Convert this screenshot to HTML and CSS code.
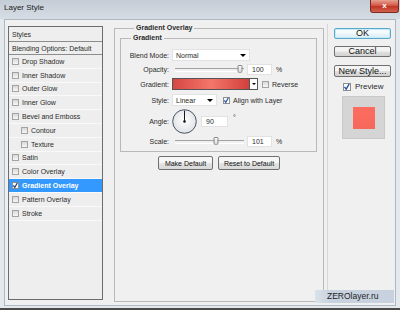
FILE: index.html
```html
<!DOCTYPE html>
<html lang="en">
<head>
    <meta charset="UTF-8">
    <title>Layer Style</title>
    <link rel="stylesheet" href="styles.css">
</head>
<body>
    <div class="window">
        <div class="titlebar">
            <span class="title">Layer Style</span>
            <span class="close">x</span>
        </div>
        <div class="dialog">
            <ul class="styles-list">
                <li class="head first">Styles</li>
                <li class="head">Blending Options: Default</li>
                <li><span class="check"></span>Drop Shadow</li>
                <li><span class="check"></span>Inner Shadow</li>
                <li><span class="check"></span>Outer Glow</li>
                <li><span class="check"></span>Inner Glow</li>
                <li><span class="check"></span>Bevel and Emboss</li>
                <li class="sub"><span class="check"></span>Contour</li>
                <li class="sub"><span class="check"></span>Texture</li>
                <li><span class="check"></span>Satin</li>
                <li><span class="check"></span>Color Overlay</li>
                <li class="active"><span class="check on"><svg viewBox="0 0 7 7"><path d="M1.3 3.4l1.5 2 2.6-4.6" fill="none" stroke="#1d3f7a" stroke-width="1.2"/></svg></span>Gradient Overlay</li>
                <li><span class="check"></span>Pattern Overlay</li>
                <li><span class="check"></span>Stroke</li>
            </ul>

            <fieldset class="group outer">
                <legend>Gradient Overlay</legend>
                <fieldset class="group inner">
                    <legend>Gradient</legend>
                    <div class="row">
                        <label>Blend Mode:</label>
                        <div class="select wide">Normal<i class="arrow"></i></div>
                    </div>
                    <div class="row">
                        <label>Opacity:</label>
                        <div class="slider"><span class="thumb" style="left: 94%"></span></div>
                        <span class="field">100</span>
                        <span class="unit">%</span>
                    </div>
                    <div class="row tall">
                        <label>Gradient:</label>
                        <div class="gradient-bar"></div>
                        <div class="gradient-drop"><i class="arrow"></i></div>
                        <span class="check opt-check"></span>
                        <span class="opt">Reverse</span>
                    </div>
                    <div class="row tall">
                        <label>Style:</label>
                        <div class="select narrow">Linear<i class="arrow"></i></div>
                        <span class="check on opt-check align"><svg viewBox="0 0 7 7"><path d="M1.3 3.4l1.5 2 2.6-4.6" fill="none" stroke="#2b57a8" stroke-width="1.2"/></svg></span>
                        <span class="opt">Align with Layer</span>
                    </div>
                    <div class="row angle">
                        <label>Angle:</label>
                        <svg class="dial" width="25" height="25" viewBox="0 0 25 25">
                            <defs>
                                <radialGradient id="dialFill" cx="50%" cy="45%" r="55%">
                                    <stop offset="0" stop-color="#ffffff"/>
                                    <stop offset="1" stop-color="#dfe2e6"/>
                                </radialGradient>
                            </defs>
                            <circle cx="12.5" cy="12.5" r="11.8" fill="url(#dialFill)" stroke="#4b5564" stroke-width="1"/>
                            <line x1="12.5" y1="12.5" x2="12.5" y2="1.5" stroke="#1a1a1a" stroke-width="1"/>
                            <circle cx="12.5" cy="12.5" r="1.3" fill="#111"/>
                        </svg>
                        <span class="field short">90</span>
                        <span class="unit deg">°</span>
                    </div>
                    <div class="row">
                        <label>Scale:</label>
                        <div class="slider"><span class="thumb" style="left: 59%"></span></div>
                        <span class="field">101</span>
                        <span class="unit">%</span>
                    </div>
                </fieldset>
                <div class="defaults">
                    <button class="small make">Make Default</button>
                    <button class="small reset">Reset to Default</button>
                </div>
            </fieldset>

            <div class="side">
                <button class="btn primary">OK</button>
                <button class="btn">Cancel</button>
                <button class="btn new">New Style...</button>
                <label class="preview-check"><span class="check on"><svg viewBox="0 0 7 7"><path d="M1.3 3.4l1.5 2 2.6-4.6" fill="none" stroke="#2b57a8" stroke-width="1.2"/></svg></span>Preview</label>
                <div class="preview"><div class="swatch"></div></div>
            </div>
        </div>
        <div class="watermark">ZEROlayer.ru</div>
    </div>
</body>
</html>
```

FILE: styles.css
```css
/* base */
* {
    box-sizing: border-box;
}

body {
    margin: 0;
    font-family: "Liberation Sans", Arial, sans-serif;
    font-size: 7px;
    color: #2b2b2b;
    background: #e4e9ee;
}

.window {
    position: relative;
    width: 400px;
    height: 310px;
    background: #e4e9ee;
    border-bottom: 2px solid #4a4a4a;
    overflow: hidden;
}

/* title bar */
.titlebar {
    display: flex;
    align-items: flex-start;
    height: 19px;
    background: linear-gradient(#c4ccd5, #d6dde5);
}

.title {
    padding: 3px 0 0 4px;
    font-size: 8px;
    line-height: 9px;
    color: #1c1c1c;
}

.close {
    margin-left: auto;
    margin-right: 1px;
    width: 29px;
    height: 13px;
    border: 1px solid #7d2b22;
    border-top: none;
    border-radius: 0 0 3px 3px;
    background: linear-gradient(#e6a092, #d35a47 45%, #bf3626 55%, #d3624c);
    color: #fff;
    font-weight: bold;
    font-size: 8px;
    line-height: 11px;
    text-align: center;
}

/* dialog body */
.dialog {
    display: flex;
    margin: 0 4px;
    height: 287px;
    padding: 4px 0 3px 3px;
    border: 1px solid #aeb8c2;
    background: #f0f0f0;
}

/* styles list */
.styles-list {
    flex: none;
    width: 95px;
    margin: 2px 11px 2px 0;
    padding: 0;
    list-style: none;
    border: 1px solid #6c6c6c;
    background: #eeeeee;
}

.styles-list li {
    display: flex;
    align-items: center;
    height: 13.8px;
    border-bottom: 1px solid #f9f9f9;
    white-space: nowrap;
}

.styles-list li.head {
    height: 13px;
    padding-left: 3px;
    border-bottom: 1px solid #8c8c8c;
}

.styles-list li.head.first {
    height: 15px;
}

.styles-list li.sub {
    padding-left: 9px;
}

.styles-list li.active {
    background: #3399ff;
    color: #fff;
    font-weight: bold;
}

/* checkbox */
.check {
    flex: none;
    display: flex;
    width: 7px;
    height: 7px;
    margin: 0 3px;
    border: 1px solid #a3a3a3;
    background: linear-gradient(#d8d8d8, #f7f7f7);
}

.check svg {
    width: 7px;
    height: 7px;
    margin: -1px;
}

.check.on {
    background: #fff;
    border-color: #8e8f8f;
}

/* group boxes */
.group {
    margin: 0;
    min-width: 0;
    border: 1px solid #b9b9b9;
}

.group legend {
    padding: 0 2px;
    font-weight: bold;
    line-height: 8px;
}

.outer {
    flex: none;
    width: 210px;
    padding: 2px 6px 0 5px;
}

.outer legend {
    margin-left: 14px;
}

.inner {
    padding: 6px 0 3px 0;
}

.inner legend {
    margin-left: 10px;
}

/* rows */
.row {
    display: flex;
    align-items: center;
    height: 14px;
    white-space: nowrap;
}

.row.tall {
    height: 16px;
}

.row.angle {
    height: 26px;
}

.row label {
    flex: none;
    width: 48px;
    margin-right: 3px;
    text-align: right;
}

.select {
    display: flex;
    align-items: center;
    height: 12px;
    padding-left: 3px;
    background: #fff;
    border: 1px solid #e2e2e2;
}

.select.wide {
    width: 78px;
}

.select.narrow {
    width: 45px;
}

.arrow {
    margin-left: auto;
    margin-right: 3px;
    width: 0;
    height: 0;
    border-left: 3px solid transparent;
    border-right: 3px solid transparent;
    border-top: 3px solid #000;
}

.slider {
    position: relative;
    width: 69px;
    height: 8px;
    margin-left: 3px;
}

.slider::before {
    content: "";
    position: absolute;
    left: 0;
    right: 0;
    top: 3px;
    height: 2px;
    border-top: 1px solid #a2a2a2;
    border-bottom: 1px solid #fff;
}

.thumb {
    position: absolute;
    top: 0;
    width: 5px;
    height: 8px;
    transform: translateX(-50%);
    border: 1px solid #8a8a8a;
    border-radius: 1px 1px 2px 2px;
    background: linear-gradient(#fbfbfb, #d6d6d6);
}

.field {
    width: 25px;
    height: 11px;
    margin-left: 3px;
    padding-left: 4px;
    line-height: 9px;
    background: #fff;
    border: 1px solid #e2e2e2;
}

.field.short {
    width: 27px;
    margin-left: 4px;
}

.unit {
    margin-left: 4px;
}

.unit.deg {
    align-self: flex-start;
    margin: 6px 0 0 5px;
}

.gradient-bar {
    width: 78px;
    height: 12px;
    border: 1px solid #555;
    background: linear-gradient(90deg, #d64743, #f4766a 50%, #d1403b);
}

.gradient-drop {
    display: flex;
    align-items: center;
    width: 8px;
    height: 12px;
    border: 1px solid #555;
    border-left: none;
    background: #fff;
}

.gradient-drop .arrow {
    margin: 0 auto;
    border-width: 2px 2px 0;
}

.opt-check {
    margin: 0 3px 0 4px;
}

.opt-check.align {
    margin-left: 6px;
}

.dial {
    flex: none;
}

/* group buttons */
.defaults {
    display: flex;
    gap: 5px;
    margin: 4px 0 0 38px;
}

button {
    font-family: inherit;
    color: #111;
    padding: 0;
    cursor: pointer;
}

.small {
    height: 14px;
    font-size: 7px;
    border: 1px solid #707070;
    border-radius: 2px;
    background: linear-gradient(#f6f6f6 45%, #e2e2e2 55%, #d9d9d9);
}

.small.make {
    width: 55px;
}

.small.reset {
    width: 62px;
}

/* right side */
.side {
    display: flex;
    flex-direction: column;
    align-items: flex-start;
    padding-left: 7px;
    border-left: 3px solid #f0f0f0;
    box-shadow: inset 1px 0 0 #d6d6d6;
}

.btn {
    width: 57px;
    height: 11px;
    font-size: 9px;
    line-height: 9px;
    border: 1px solid #707070;
    border-radius: 2px;
    background: linear-gradient(#f4f4f4 45%, #e0e0e0 55%, #d2d2d2);
    margin-top: 7px;
}

.btn.primary {
    margin-top: 4px;
    border-color: #5aa9c9;
    box-shadow: inset 0 0 0 1px #c4ecf8;
    background: linear-gradient(#f5fbfd 45%, #e9f4f9 55%, #dcedf5);
}

.btn.new {
    height: 12px;
    margin-top: 8px;
}

.preview-check {
    display: flex;
    align-items: center;
    height: 9px;
    margin: 5px 0 0 9px;
    font-size: 8px;
}

.preview-check .check {
    width: 8px;
    height: 8px;
    margin: 0 4px 0 0;
}

.preview-check .check svg {
    width: 8px;
    height: 8px;
}

.preview {
    display: flex;
    align-items: center;
    justify-content: center;
    width: 43px;
    height: 43px;
    margin: 5px 0 0 8px;
    background: #d5d5d5;
    border: 1px solid #c9c9c9;
}

.swatch {
    width: 22px;
    height: 22px;
    background: linear-gradient(#fd6c5f, #f6685b);
}

/* watermark */
.watermark {
    position: absolute;
    left: 315px;
    top: 290px;
    width: 79px;
    height: 13px;
    padding-left: 12px;
    font-size: 8.5px;
    line-height: 13px;
    color: #1e1e1e;
    background: linear-gradient(90deg, #dbe2e9, #c7d2de 20%);
}
```
